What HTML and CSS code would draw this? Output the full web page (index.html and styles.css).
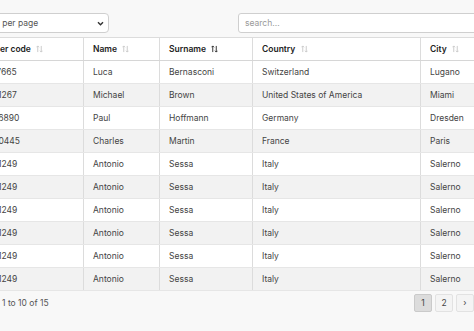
FILE: index.html
```html
<!DOCTYPE html>
<html lang="en">
<head>
    <meta charset="UTF-8">
    <meta name="viewport" content="width=device-width, initial-scale=1.0">
    <title>Customers</title>
    <link rel="stylesheet" href="styles.css">
</head>
<body>
<div class="wrap">
    <div class="toolbar">
        <div class="per-page">
            <span>10 per page</span>
            <svg class="chev" width="7" height="5" viewBox="0 0 8 6"><path d="M1 1.5 L4 4.5 L7 1.5" fill="none" stroke="#333" stroke-width="1.7"/></svg>
        </div>
        <input class="search" type="text" placeholder="search...">
    </div>
    <table class="grid">
        <colgroup>
            <col style="width:130px">
            <col style="width:76px">
            <col style="width:93px">
            <col style="width:168px">
            <col style="width:140px">
        </colgroup>
        <thead>
            <tr>
                <th>Customer code <span class="sort"></span></th>
                <th>Name <span class="sort"></span></th>
                <th>Surname <span class="sort active"></span></th>
                <th>Country <span class="sort"></span></th>
                <th>City <span class="sort"></span></th>
            </tr>
        </thead>
        <tbody id="rows"></tbody>
    </table>
    <div class="footer">
        <span class="info">Showing 1 to 10 of 15</span>
        <div class="pager">
            <button class="current">1</button>
            <button>2</button>
            <button>›</button>
            <button>»</button>
        </div>
    </div>
</div>
<script>
    // customer list, first page
    const customers = [
        ['1000017665', 'Luca', 'Bernasconi', 'Switzerland', 'Lugano'],
        ['1000021267', 'Michael', 'Brown', 'United States of America', 'Miami'],
        ['1000036890', 'Paul', 'Hoffmann', 'Germany', 'Dresden'],
        ['1000040445', 'Charles', 'Martin', 'France', 'Paris'],
        ['1000051249', 'Antonio', 'Sessa', 'Italy', 'Salerno'],
        ['1000051249', 'Antonio', 'Sessa', 'Italy', 'Salerno'],
        ['1000051249', 'Antonio', 'Sessa', 'Italy', 'Salerno'],
        ['1000051249', 'Antonio', 'Sessa', 'Italy', 'Salerno'],
        ['1000051249', 'Antonio', 'Sessa', 'Italy', 'Salerno'],
        ['1000051249', 'Antonio', 'Sessa', 'Italy', 'Salerno']
    ];

    const sortIcon = '<svg width="7" height="8" viewBox="0 0 8 9"><path d="M2 8 V1 M0.5 2.5 L2 1 L3.5 2.5 M6 1 V8 M4.5 6.5 L6 8 L7.5 6.5" fill="none" stroke="currentColor" stroke-width="1.1"/></svg>';
    document.querySelectorAll('.sort').forEach(el => el.innerHTML = sortIcon);

    const body = document.getElementById('rows');
    customers.forEach(c => {
        const tr = document.createElement('tr');
        c.forEach(v => {
            const td = document.createElement('td');
            td.textContent = v;
            tr.appendChild(td);
        });
        body.appendChild(tr);
    });
</script>
</body>
</html>
```

FILE: styles.css
```css
html, body {
    margin: 0;
    padding: 0;
    overflow: hidden;
}
body {
    background: #f8f8f8;
    font-family: 'Inter', 'Liberation Sans', sans-serif;
    font-size: 8.5px;
    color: #333;
}
.wrap {
    width: 620px;
    margin-left: -47px;
    padding-top: 13px;
}
.toolbar {
    display: flex;
    align-items: center;
    height: 20px;
    margin-bottom: 4px;
}
.per-page {
    box-sizing: border-box;
    width: 128px;
    height: 20px;
    margin-left: 28px;
    display: flex;
    align-items: center;
    justify-content: space-between;
    padding: 0 4px 0 9px;
    background: #fff;
    border: 1px solid #cfcfcf;
    border-radius: 4px;
    color: #555;
}
.search {
    box-sizing: border-box;
    width: 300px;
    height: 20px;
    margin-left: 129px;
    padding: 0 6px;
    font-family: inherit;
    font-size: 8.5px;
    background: #fff;
    border: 1px solid #cfcfcf;
    border-radius: 3px;
}
.search::placeholder {
    color: #9a9a9a;
}
.grid {
    width: 607px;
    table-layout: fixed;
    border-collapse: collapse;
    background: #fff;
}
.grid th, .grid td {
    height: 23px;
    padding: 0 9px;
    text-align: left;
    white-space: nowrap;
    overflow: hidden;
    border-left: 1px solid #dcdcdc;
    border-bottom: 1px solid #e6e6e6;
    box-sizing: border-box;
}
.grid th:first-child, .grid td:first-child {
    padding-left: 14px;
}
.grid th {
    font-weight: 600;
    color: #222;
    border-top: 1px solid #dcdcdc;
    border-bottom: 1px solid #d6d6d6;
}
.grid td {
    color: #444;
}
.grid tbody tr:nth-child(even) {
    background: #f2f2f2;
}
.sort {
    display: inline-block;
    margin-left: 3px;
    color: #cacaca;
    vertical-align: -1px;
}
.sort.active {
    color: #333;
}
.sort svg {
    display: block;
}
.footer {
    box-sizing: border-box;
    display: flex;
    align-items: center;
    justify-content: space-between;
    height: 18px;
    margin-top: 3px;
    padding-left: 12px;
    width: 542px;
    color: #555;
}
.pager {
    display: flex;
    gap: 3px;
}
.pager button {
    width: 18px;
    height: 18px;
    padding: 0;
    font-family: inherit;
    font-size: 8.5px;
    color: #444;
    background: #f4f4f4;
    border: 1px solid #e2e2e2;
    border-radius: 2px;
}
.pager button.current {
    background: #dcdcdc;
    border-color: #cacaca;
}
```
